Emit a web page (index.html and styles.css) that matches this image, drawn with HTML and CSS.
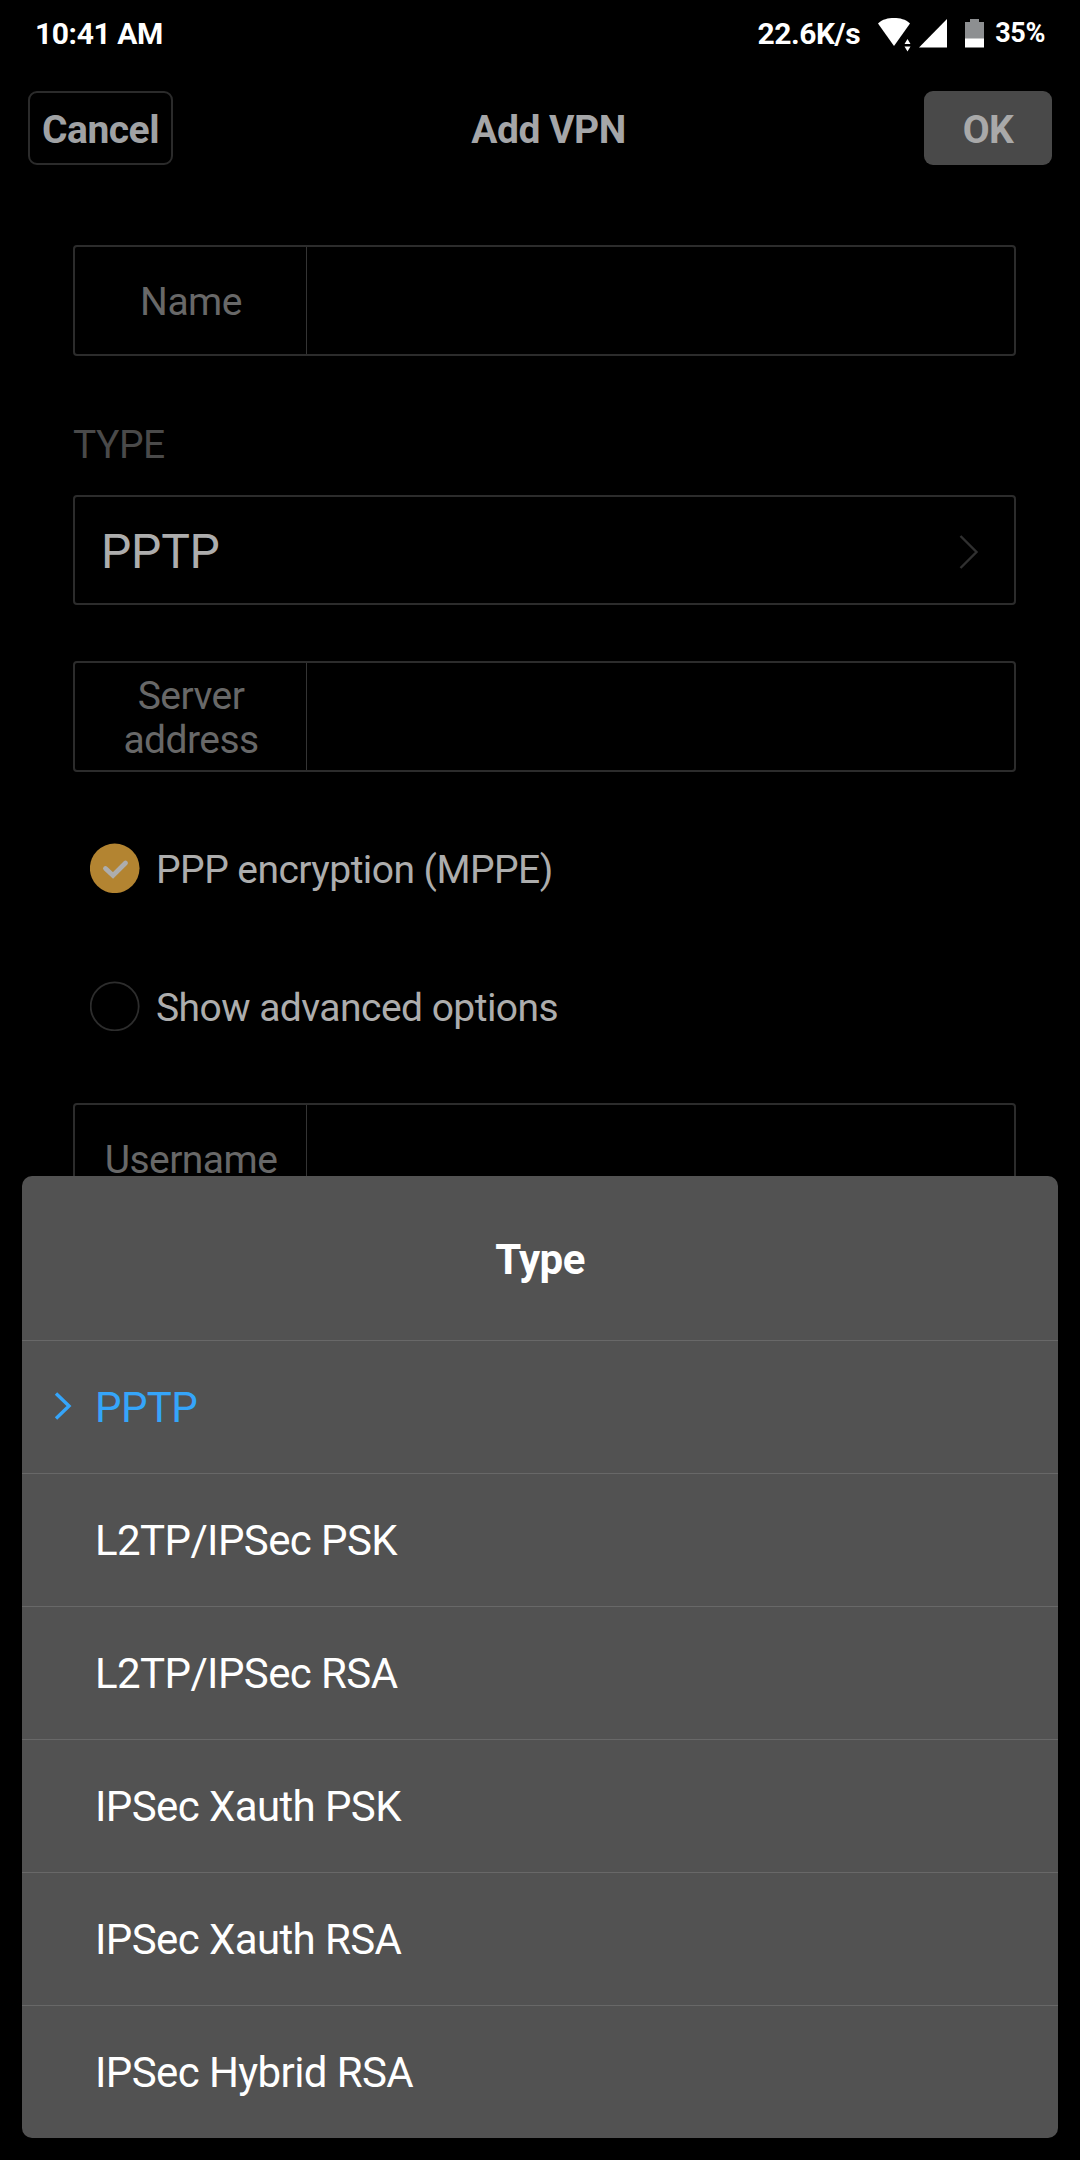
FILE: index.html
```html
<!DOCTYPE html>
<html lang="en">
<head>
<meta charset="utf-8">
<title>Add VPN</title>
<link rel="stylesheet" href="styles.css">
</head>
<body>
<div class="screen">
  <header class="status-bar">
    <span class="clock">10:41 AM</span>
    <div class="status-icons">
      <span class="net-speed">22.6K/s</span>
      <svg class="icon-wifi" width="34" height="36" viewBox="0 0 34 36" aria-hidden="true">
        <path d="M0 6.500C4.500 2.200 10 1 16 1s11.500 1.200 16 5.500L16 29z" fill="#fff"/>
        <path d="M29.500 20v15" stroke="#000" stroke-width="8"/>
        <path d="M26.500 27l3-5 3 5zM26.500 29.500h6l-3 5z" fill="#fff"/>
      </svg>
      <svg class="icon-signal" width="28" height="29" viewBox="0 0 28 29" aria-hidden="true">
        <path d="M28 0v28.500H0z" fill="#fff"/>
      </svg>
      <svg class="icon-battery" width="19" height="29" viewBox="0 0 19 29" aria-hidden="true">
        <path d="M0 3h5V0h9v3h5v17H0z" fill="#8d8f91"/>
        <path d="M0 19.500h19v9H0z" fill="#fff"/>
      </svg>
      <span class="battery-level">35%</span>
    </div>
  </header>

  <nav class="title-bar">
    <button class="btn btn-cancel">Cancel</button>
    <h1 class="title">Add VPN</h1>
    <button class="btn btn-ok">OK</button>
  </nav>

  <main class="form">
    <div class="field field-name"><span class="field-label">Name</span></div>
    <h2 class="section-label">TYPE</h2>
    <div class="select">
      <span class="select-value">PPTP</span>
      <svg width="20" height="34" viewBox="0 0 20 34" fill="none" stroke="#303030" stroke-width="2.400" aria-hidden="true"><path d="M1.500 1l16 16-16 16"/></svg>
    </div>
    <div class="field field-server"><span class="field-label">Server address</span></div>
    <div class="check check-on">
      <svg width="50" height="50" viewBox="0 0 50 50" aria-hidden="true">
        <circle cx="24.700" cy="25.300" r="24.800" fill="#b38431"/>
        <path d="M15.500 25.500l7.500 7 12.500-12.500" fill="none" stroke="#adadad" stroke-width="4.800" stroke-linecap="round"/>
      </svg>
      <span>PPP encryption (MPPE)</span>
    </div>
    <div class="check check-off">
      <svg width="50" height="50" viewBox="0 0 50 50" aria-hidden="true"><circle cx="24.700" cy="25.300" r="24" fill="none" stroke="#2d2d2d" stroke-width="1.800"/></svg>
      <span>Show advanced options</span>
    </div>
    <div class="field field-user"><span class="field-label">Username</span></div>
  </main>

  <section class="sheet">
    <h2 class="sheet-title">Type</h2>
    <ul class="options">
      <li class="option option-selected">
        <svg width="18" height="28" viewBox="0 0 18 28" fill="none" stroke="#35a5fa" stroke-width="3.400" aria-hidden="true"><path d="M2 1.500L15 14 2 26.500"/></svg>
        <span>PPTP</span>
      </li>
      <li class="option">L2TP/IPSec PSK</li>
      <li class="option">L2TP/IPSec RSA</li>
      <li class="option">IPSec Xauth PSK</li>
      <li class="option">IPSec Xauth RSA</li>
      <li class="option">IPSec Hybrid RSA</li>
    </ul>
  </section>
</div>
</body>
</html>
```
FILE: styles.css
```css
* { box-sizing: border-box; }

body {
  margin: 0;
  background: #000;
  color: #adadad;
  font-family: Roboto, "Liberation Sans", sans-serif;
}

h1, h2, ul {
  margin: 0;
  padding: 0;
}

svg {
  display: block;
  flex: none;
}

.screen {
  position: relative;
  width: 1080px;
  height: 2160px;
  overflow: hidden;
}

.status-bar {
  display: flex;
  justify-content: space-between;
  align-items: center;
  height: 66px;
  padding: 0 35px;
  color: #fff;
  font-weight: 700;
}

.clock {
  font-size: 30px;
  letter-spacing: -0.4px;
}

.status-icons {
  display: flex;
  align-items: center;
}

.net-speed {
  margin-right: 18px;
  font-size: 30px;
  letter-spacing: -0.45px;
}

.icon-wifi { margin-top: 4px; }
.icon-signal { margin-left: 7px; }
.icon-battery { margin-left: 18px; }

.battery-level {
  margin-left: 11px;
  font-size: 27px;
  letter-spacing: -0.4px;
}

.title-bar {
  display: flex;
  align-items: center;
  height: 124px;
  padding: 0 28px;
}

.btn {
  height: 74px;
  padding: 3px 0 0;
  border: 0;
  border-radius: 9px;
  background: none;
  color: #a0a2a4;
  font: 700 39px Roboto, sans-serif;
  letter-spacing: -0.5px;
}

.btn-cancel {
  width: 145px;
  border: 2px solid #2b2b2b;
}

.btn-ok {
  width: 128px;
  background: #494949;
  color: #a9a9a9;
}

.title {
  flex: 1;
  padding-top: 4px;
  color: #a5a6a8;
  font-size: 39px;
  letter-spacing: -0.5px;
  text-align: center;
}

.form {
  display: flex;
  flex-direction: column;
  padding: 55px 64px 0 73px;
  letter-spacing: -0.54px;
}

.field {
  display: flex;
  height: 111px;
  border: 2px solid #2c2c2c;
  border-radius: 4px;
}

.field-label {
  display: flex;
  align-items: center;
  justify-content: center;
  width: 232px;
  padding: 3px 24px 0 25px;
  border-right: 1px solid #343434;
  color: #686868;
  font-size: 39px;
  line-height: 44px;
  text-align: center;
}

.section-label {
  margin-top: 66px;
  height: 73px;
  color: #4a4a4a;
  font-size: 39px;
  font-weight: 400;
  line-height: 46px;
}

.select {
  display: flex;
  align-items: center;
  justify-content: space-between;
  height: 110px;
  padding: 3px 35px 0 26px;
  border: 2px solid #2c2c2c;
  border-radius: 4px;
  color: #adadad;
  font-size: 48px;
  letter-spacing: -0.2px;
}

.field-server { margin-top: 56px; }

.check {
  display: flex;
  align-items: center;
  gap: 16px;
  height: 50px;
  margin-left: 17px;
  font-size: 39px;
}

.check span { padding-top: 4px; }

.check-on { margin-top: 71px; }
.check-off { margin-top: 88px; }
.field-user { margin-top: 72px; }

.sheet {
  position: absolute;
  left: 22px;
  right: 22px;
  bottom: 22px;
  height: 962px;
  border-radius: 10px;
  background: #525252;
  color: #fff;
  letter-spacing: -0.6px;
}

.sheet-title {
  height: 164px;
  padding-top: 3px;
  font-size: 42px;
  line-height: 162px;
  text-align: center;
}

.options { list-style: none; }

.option {
  display: flex;
  align-items: center;
  height: 133px;
  padding: 1px 0 0 73px;
  border-top: 1px solid #686868;
  font-size: 42px;
}

.option-selected {
  gap: 23px;
  padding-left: 32px;
  color: #35a5fa;
}

.option-selected svg { margin-bottom: 3px; }
```
